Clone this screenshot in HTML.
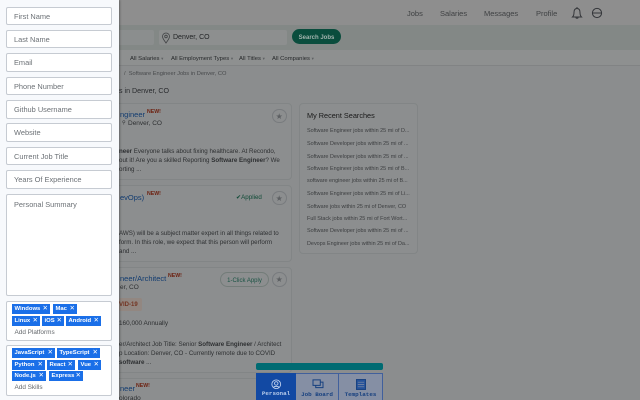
<!DOCTYPE html>
<html><head><meta charset="utf-8"><style>
html,body{margin:0;padding:0;width:640px;height:400px;overflow:hidden;background:#8b8d8e;font-family:"Liberation Sans",sans-serif}
.a{position:absolute;white-space:nowrap}
#bg{position:absolute;left:0;top:0;width:640px;height:400px;background:#8b8d8e;filter:blur(.35px);overflow:hidden}
.card{position:absolute;background:#8c8e8f;border:1px solid #828586;border-radius:4px;box-sizing:border-box}
.t{font-size:6.2px;color:#2e3032}
.s{font-size:5.45px;color:#3c3e40;left:307px}
.title{font-size:7.5px;color:#123c70}
.new{font-size:5.2px;color:#6c1f0e;font-weight:bold}
.star{position:absolute;width:14.5px;height:14.5px;box-sizing:border-box;border:1px solid #787b7e;border-radius:50%;color:#5c5f62;font-size:8px;line-height:13px;text-align:center}
.nav{font-size:7.5px;color:#3f4143;top:9px}
.f{font-size:5.9px;color:#27292b;top:56px}
.f i{font-style:normal;color:#5d5f61;font-size:4.5px}
#panel{position:absolute;left:0;top:0;width:119px;height:400px;background:#f7f9fc;box-shadow:1px 0 2px rgba(0,0,0,.3);filter:blur(.25px)}
.in{position:absolute;left:6px;width:106px;height:18px;box-sizing:border-box;background:#fff;border:1px solid #c6cbd2;border-radius:2px;font-size:7.4px;line-height:17px;color:#6c7176;padding:0 0 0 7px;white-space:nowrap}
.tag{position:absolute;height:10px;background:#1a6fe8;color:#fff;font-size:5.9px;font-weight:bold;line-height:10px;padding-left:2.5px;box-sizing:border-box;white-space:nowrap}
.tag span{position:absolute;right:2px;top:0;font-weight:normal;font-size:6.5px}
.tab{position:absolute;top:373px;height:27px;box-sizing:border-box;font-family:"Liberation Mono",monospace;font-weight:bold;font-size:5.9px;text-align:center;padding-top:17px}
</style></head><body>
<div id="bg">
<div class="a" style="left:0;top:0;width:640px;height:25px;background:#8e8e8e"></div>
<div class="a nav" style="left:407px">Jobs</div>
<div class="a nav" style="left:440px">Salaries</div>
<div class="a nav" style="left:484px">Messages</div>
<div class="a nav" style="left:536px">Profile</div>
<svg class="a" style="left:570px;top:6px" width="14" height="14" viewBox="0 0 14 14" fill="none" stroke="#34363a" stroke-width="1"><path d="M2.500 11h9c-1-1-1.500-2-1.500-4.500C10 4 9 2.500 7 2.500S4 4 4 6.500C4 9 3.500 10 2.500 11zM7 1v1.500M5.800 11.500a1.300 1.300 0 0 0 2.400 0"/></svg>
<svg class="a" style="left:590px;top:6px" width="14" height="14" viewBox="0 0 14 14" fill="none" stroke="#34363a" stroke-width="1"><circle cx="7" cy="7" r="4.600"/><path d="M2.500 7h9"/></svg>

<div class="a" style="left:0;top:25px;width:640px;height:25px;background:#838886"></div>
<div class="a" style="left:100px;top:30px;width:54px;height:15px;background:#8b8e8e;border-radius:2px"></div>
<div class="a" style="left:159px;top:30px;width:128px;height:15px;background:#8d8f8f;border-radius:2px"></div>
<svg class="a" style="left:161px;top:32px" width="10" height="12" viewBox="0 0 10 12" fill="none" stroke="#404244" stroke-width=".8"><path d="M5 11C3 8 1.500 6.500 1.500 4.500a3.500 3.500 0 0 1 7 0C8.500 6.500 7 8 5 11z"/><circle cx="5" cy="4.500" r="1.300"/></svg>
<div class="a" style="left:173px;top:34px;font-size:7px;color:#222426">Denver, CO</div>
<div class="a" style="left:292px;top:29px;width:49px;height:15px;border-radius:8px;background:#0a4d3d;color:#a3b3ae;font-size:6px;font-weight:bold;line-height:18px;text-align:center">Search Jobs</div>

<div class="a" style="left:0;top:50px;width:640px;height:15px;background:#8e9090;border-bottom:1px solid #818384"></div>
<div class="a f" style="left:130px">All Salaries <i>▾</i></div>
<div class="a f" style="left:171px">All Employment Types <i>▾</i></div>
<div class="a f" style="left:239px">All Titles <i>▾</i></div>
<div class="a f" style="left:272px">All Companies <i>▾</i></div>
<div class="a" style="left:124px;top:71px;font-size:5.7px;color:#484a4c">/ &nbsp;Software Engineer Jobs in Denver, CO</div>
<div class="a" style="left:119px;top:87px;font-size:7.100px;color:#292b2e">s in Denver, CO</div>

<div class="card" style="left:100px;top:103px;width:192px;height:77px"></div>
<div class="a title" style="left:120px;top:110px">ngineer</div><div class="a new" style="left:147px;top:109px">NEW!</div>
<div class="star" style="left:272px;top:108.500px">★</div>
<div class="a t" style="left:122px;top:120px;font-size:5px">⚲</div>
<div class="a t" style="left:128px;top:120px;font-size:6.500px">Denver, CO</div>
<div class="a t" style="left:119px;top:148px"><b>neer</b> Everyone talks about fixing healthcare. At Recondo,</div>
<div class="a t" style="left:119px;top:157px">out it! Are you a skilled Reporting <b>Software Engineer</b>? We</div>
<div class="a t" style="left:119px;top:166px">orting ...</div>

<div class="card" style="left:100px;top:185px;width:192px;height:77px"></div>
<div class="a title" style="left:120px;top:193px">evOps)</div><div class="a new" style="left:147px;top:191px">NEW!</div>
<div class="a" style="left:236px;top:194px;font-size:6.200px;color:#0f4a36">✔Applied</div>
<div class="star" style="left:272px;top:190.500px">★</div>
<div class="a t" style="left:119px;top:230px">AWS) will be a subject matter expert in all things related to</div>
<div class="a t" style="left:119px;top:239px">form. In this role, we expect that this person will perform</div>
<div class="a t" style="left:119px;top:248px">and ...</div>

<div class="card" style="left:100px;top:267px;width:192px;height:106px"></div>
<div class="a title" style="left:120px;top:274px">neer/Architect</div><div class="a new" style="left:168px;top:273px">NEW!</div>
<div class="a" style="left:220px;top:272px;width:49px;height:15px;box-sizing:border-box;border:1px solid #737c79;border-radius:8px;font-size:6px;color:#1b5445;line-height:16px;text-align:center">1-Click Apply</div>
<div class="star" style="left:272px;top:272px">★</div>
<div class="a t" style="left:120px;top:284px;font-size:6.500px">er, CO</div>
<div class="a" style="left:119px;top:298px;width:23px;height:13px;background:#928781;border-radius:2px;font-size:6px;line-height:14px;color:#743522;font-weight:bold">VID-19</div>
<div class="a t" style="left:119px;top:320px;font-size:6.400px">160,000 Annually</div>
<div class="a t" style="left:119px;top:341px">er/Architect Job Title: Senior <b>Software Engineer</b> / Architect</div>
<div class="a t" style="left:119px;top:350px">p Location: Denver, CO - Currently remote due to COVID</div>
<div class="a t" style="left:119px;top:359px"><b>software</b> ...</div>

<div class="card" style="left:100px;top:378px;width:192px;height:30px"></div>
<div class="a title" style="left:120px;top:384px">neer</div><div class="a new" style="left:136px;top:383px">NEW!</div>
<div class="a t" style="left:119px;top:395px;font-size:6.500px">olorado</div>

<div class="card" style="left:299px;top:103px;width:119px;height:151px"></div>
<div class="a" style="left:307px;top:111px;font-size:7.300px;color:#181818">My Recent Searches</div>
<div class="a s" style="top:128px">Software Engineer jobs within 25 mi of D...</div>
<div class="a s" style="top:141px">Software Developer jobs within 25 mi of ...</div>
<div class="a s" style="top:154px">Software Developer jobs within 25 mi of ...</div>
<div class="a s" style="top:166px">Software Engineer jobs within 25 mi of B...</div>
<div class="a s" style="top:178px">software engineer jobs within 25 mi of B...</div>
<div class="a s" style="top:191px">Software Engineer jobs within 25 mi of Li...</div>
<div class="a s" style="top:204px">Software jobs within 25 mi of Denver, CO</div>
<div class="a s" style="top:216px">Full Stack jobs within 25 mi of Fort Wort...</div>
<div class="a s" style="top:228px">Software Developer jobs within 25 mi of ...</div>
<div class="a s" style="top:241px">Devops Engineer jobs within 25 mi of Da...</div>
</div>

<div id="panel">
<div class="in" style="top:7px">First Name</div>
<div class="in" style="top:30px">Last Name</div>
<div class="in" style="top:53px;height:19px">Email</div>
<div class="in" style="top:77px">Phone Number</div>
<div class="in" style="top:100px;height:19px">Github Username</div>
<div class="in" style="top:123px;height:19px">Website</div>
<div class="in" style="top:147px">Current Job Title</div>
<div class="in" style="top:170px;height:19px">Years Of Experience</div>
<div class="in" style="top:194px;height:102px;padding-top:1px">Personal Summary</div>
<div class="in" style="top:301px;height:40px"></div>
<div class="tag" style="left:12px;top:304px;width:38px">Windows<span>✕</span></div>
<div class="tag" style="left:53px;top:304px;width:24px">Mac<span>✕</span></div>
<div class="tag" style="left:12px;top:316px;width:28px">Linux<span>✕</span></div>
<div class="tag" style="left:42px;top:316px;width:22px">iOS<span>✕</span></div>
<div class="tag" style="left:66px;top:316px;width:35px">Android<span>✕</span></div>
<div class="a" style="left:14.500px;top:329px;font-size:6.400px;color:#63676b">Add Platforms</div>
<div class="in" style="top:345px;height:51px"></div>
<div class="tag" style="left:12px;top:348px;width:43px">JavaScript<span>✕</span></div>
<div class="tag" style="left:57px;top:348px;width:43px">TypeScript<span>✕</span></div>
<div class="tag" style="left:12px;top:360px;width:33px">Python<span>✕</span></div>
<div class="tag" style="left:47px;top:360px;width:28px">React<span>✕</span></div>
<div class="tag" style="left:78px;top:360px;width:23px">Vue<span>✕</span></div>
<div class="tag" style="left:12px;top:371px;width:34px">Node.js<span>✕</span></div>
<div class="tag" style="left:49px;top:371px;width:34px">Express<span>✕</span></div>
<div class="a" style="left:14.500px;top:384px;font-size:6.400px;color:#63676b">Add Skills</div>
</div>

<div class="a" style="left:256px;top:363px;width:127px;height:7px;border-radius:2px;background:#006b72"></div>
<div class="tab" style="left:256px;width:40px;background:#1249a3;color:#b9cdeb">Personal</div>
<div class="tab" style="left:296px;width:43px;background:#858fa4;color:#17407f;border-right:1px solid #41609c;border-top:1px solid #41609c">Job Board</div>
<div class="tab" style="left:339px;width:44px;background:#858fa4;color:#17407f;border-right:1px solid #41609c;border-top:1px solid #41609c">Templates</div>
<svg class="a" style="left:271px;top:378.500px" width="10.500" height="10.500" viewBox="0 0 12 12" fill="none" stroke="#c3d3ef" stroke-width="1"><circle cx="6" cy="6" r="5"/><circle cx="6" cy="5" r="2"/><path d="M3 9.500c1-1.500 5-1.500 6 0"/></svg>
<svg class="a" style="left:312px;top:379px" width="12" height="10" viewBox="0 0 13 11" fill="none" stroke="#17407f" stroke-width="1.100"><path d="M1 1h8v6H1zM4 7v2.500h8V3.500H9"/></svg>
<svg class="a" style="left:356px;top:379px" width="10" height="11" viewBox="0 0 11 12"><rect x=".5" y=".5" width="10" height="11" fill="#25529a" stroke="#17407f"/><path d="M2 3.500h7M2 6h7M2 8.500h7" stroke="#858fa4" stroke-width=".7"/></svg>
</body></html>
